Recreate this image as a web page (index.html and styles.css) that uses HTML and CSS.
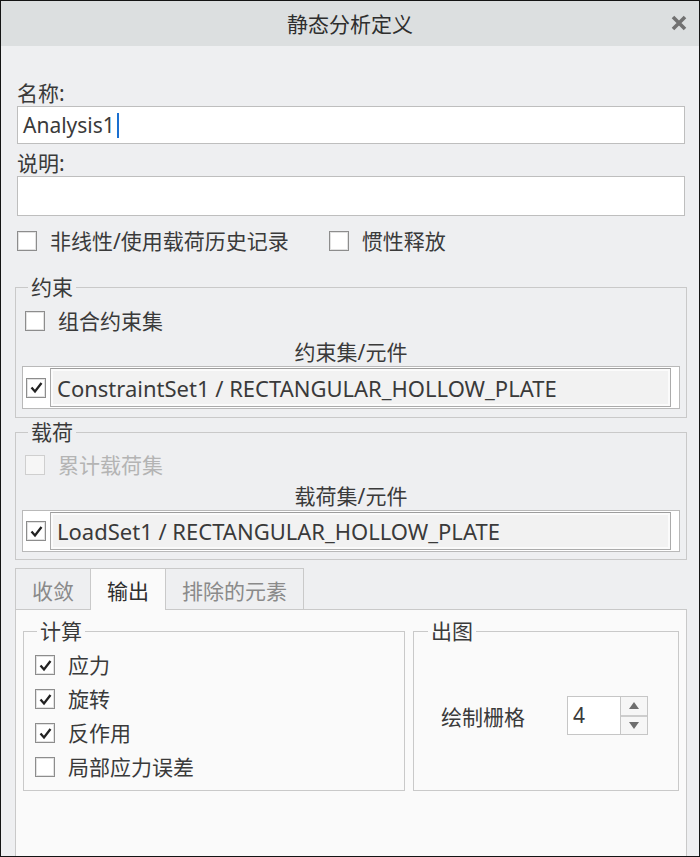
FILE: index.html
```html
<!DOCTYPE html>
<html>
<head>
  <meta charset="UTF-8">
  <title>静态分析定义</title>
  <link rel="stylesheet" href="styles.css">
</head>
<body>
  <div class="window">
    <div class="titlebar">
      <span></span>
      <div class="title">静态分析定义</div>
      <div class="close">
        <svg width="16" height="16" viewBox="0 0 16 16"><path d="M2 2 L14 14 M14 2 L2 14" stroke="#717171" stroke-width="3.6" fill="none"/></svg>
      </div>
    </div>

    <div class="content">
      <div class="field-label">名称:</div>
      <div class="text-input"><span>Analysis1</span><span class="caret"></span></div>
      <div class="field-label">说明:</div>
      <div class="text-input tall"></div>

      <div class="option-row">
        <label class="check"><span class="box"></span>非线性/使用载荷历史记录</label>
        <label class="check"><span class="box"></span>惯性释放</label>
      </div>

      <fieldset class="group">
        <legend>约束</legend>
        <label class="check inset"><span class="box"></span>组合约束集</label>
        <div class="list-head">约束集/元件</div>
        <div class="set-list">
          <span class="box checked"><svg width="17" height="17" viewBox="0 0 17 17"><path d="M3.5 8.5 L7 12.5 L13.5 4" stroke="#222" stroke-width="2.3" fill="none"/></svg></span>
          <div class="set-cell">ConstraintSet1 / RECTANGULAR_HOLLOW_PLATE</div>
        </div>
      </fieldset>

      <fieldset class="group loads">
        <legend>载荷</legend>
        <label class="check inset disabled"><span class="box"></span>累计载荷集</label>
        <div class="list-head">载荷集/元件</div>
        <div class="set-list">
          <span class="box checked"><svg width="17" height="17" viewBox="0 0 17 17"><path d="M3.5 8.5 L7 12.5 L13.5 4" stroke="#222" stroke-width="2.3" fill="none"/></svg></span>
          <div class="set-cell">LoadSet1 / RECTANGULAR_HOLLOW_PLATE</div>
        </div>
      </fieldset>

      <div class="tabs">
        <div class="tab">收敛</div>
        <div class="tab active">输出</div>
        <div class="tab">排除的元素</div>
      </div>

      <div class="tab-panel">
        <fieldset class="group calc">
          <legend>计算</legend>
          <label class="check row"><span class="box checked"><svg width="17" height="17" viewBox="0 0 17 17"><path d="M3.5 8.5 L7 12.5 L13.5 4" stroke="#222" stroke-width="2.3" fill="none"/></svg></span>应力</label>
          <label class="check row"><span class="box checked"><svg width="17" height="17" viewBox="0 0 17 17"><path d="M3.5 8.5 L7 12.5 L13.5 4" stroke="#222" stroke-width="2.3" fill="none"/></svg></span>旋转</label>
          <label class="check row"><span class="box checked"><svg width="17" height="17" viewBox="0 0 17 17"><path d="M3.5 8.5 L7 12.5 L13.5 4" stroke="#222" stroke-width="2.3" fill="none"/></svg></span>反作用</label>
          <label class="check row"><span class="box"></span>局部应力误差</label>
        </fieldset>

        <fieldset class="group calc plot">
          <legend>出图</legend>
          <div class="plot-row">
            <span>绘制栅格</span>
            <div class="spinner">
              <div class="spin-value">4</div>
              <div class="spin-arrows">
                <div class="spin-btn"><span class="arrow-up"></span></div>
                <div class="spin-btn"><span class="arrow-down"></span></div>
              </div>
            </div>
          </div>
        </fieldset>
      </div>
    </div>
  </div>
</body>
</html>
```

FILE: styles.css
```css
html, body {
  margin: 0;
  padding: 0;
}

body {
  width: 700px;
  height: 857px;
  font-family: "Noto Sans", "Noto Sans CJK SC", sans-serif;
  font-size: 21px;
  color: #3a3a3a;
  background: #eeeff1;
}

.window {
  height: 857px;
  box-sizing: border-box;
  border: 1px solid #141414;
  display: flex;
  flex-direction: column;
  background: #eeeff1;
}

.titlebar {
  height: 45px;
  flex: none;
  background: #dcdfe0;
  display: grid;
  grid-template-columns: 1fr auto 1fr;
  align-items: center;
}

.title {
  font-size: 21px;
  color: #2e2e2e;
  padding-bottom: 2px;
}

.close {
  justify-self: end;
  padding-right: 12px;
  display: flex;
  align-items: center;
  padding-bottom: 2px;
}

.content {
  flex: 1;
  display: flex;
  flex-direction: column;
  padding: 34px 12px 0 14px;
}

.field-label {
  margin-left: 2px;
  line-height: 26px;
}

.text-input {
  height: 38px;
  box-sizing: border-box;
  margin: 0 2px;
  padding-left: 5px;
  background: #fff;
  border: 1px solid #bebebe;
  display: flex;
  align-items: center;
}

.text-input.tall {
  height: 40px;
}

.text-input + .field-label {
  margin-top: 6px;
}

.caret {
  width: 2px;
  height: 25px;
  margin-left: 2px;
  background: #1a6fd0;
}

.option-row {
  margin-top: 13px;
  padding-left: 2px;
  display: flex;
  gap: 40px;
  height: 24px;
}

.check {
  display: flex;
  align-items: center;
  line-height: 24px;
}

.check.inset {
  margin-left: 3px;
}

.check.disabled {
  color: #b4b4b4;
}

.box {
  width: 20px;
  height: 20px;
  box-sizing: border-box;
  margin-right: 13px;
  border: 1px solid #8d8d8d;
  box-shadow: inset 0 0 0 1px #e2e2e2;
  background: #fff;
  display: flex;
  align-items: center;
  justify-content: center;
  flex: none;
}

.disabled .box {
  border-color: #cfcfcf;
  box-shadow: none;
  background: #f6f6f6;
}

.group {
  margin: 22px 0 0;
  padding: 10px 6px 8px 6px;
  border: 1px solid #c9c9c9;
  min-width: 0;
}

.group legend {
  margin-left: 6px;
  padding: 0 3px;
  line-height: 24px;
}

.group.loads {
  margin-top: 2px;
  padding-top: 9px;
  padding-bottom: 7px;
}

.list-head {
  margin-top: 7px;
  text-align: center;
  line-height: 24px;
}

.set-list {
  margin-top: 2px;
  height: 43px;
  box-sizing: border-box;
  padding: 1px 8px 1px 3px;
  border: 1px solid #b9b9b9;
  background: #fff;
  display: flex;
  align-items: center;
}

.loads .set-list {
  height: 42px;
}

.set-list .box {
  margin-right: 4px;
}

.set-cell {
  flex: 1;
  align-self: stretch;
  padding-left: 6px;
  font-size: 22px;
  border: 1px solid #ababab;
  border-top-color: #9d9d9d;
  box-shadow: inset 0 0 0 2px #fbfbfb;
  background: #f2f2f2;
  display: flex;
  align-items: center;
}

.tabs {
  margin-top: 8px;
  display: flex;
}

.tab {
  height: 41px;
  box-sizing: border-box;
  padding: 5px 16px 0;
  line-height: 34px;
  margin-right: -1px;
  border: 1px solid #c9c9c9;
  border-bottom: none;
  color: #8a8a8a;
  background: #eeeff1;
}

.tab.active {
  height: 42px;
  margin-bottom: -1px;
  position: relative;
  background: #fafafa;
  color: #2e2e2e;
}

.tab-panel {
  flex: 1;
  background: #fafafa;
  border: 1px solid #c9c9c9;
  border-bottom: none;
  padding: 9px 7px 0;
  display: grid;
  grid-template-columns: 382px 1fr;
  gap: 8px;
  align-items: start;
}

.group.calc {
  margin: 0;
  padding: 5px 10px 7px 11px;
  height: 172px;
  box-sizing: border-box;
}

.group.calc legend {
  margin-left: 2px;
}

.group.plot legend {
  margin-left: 3px;
}

.check.row {
  line-height: 34px;
}

.plot-row {
  margin-top: 48px;
  margin-left: 16px;
  display: flex;
  align-items: center;
  gap: 42px;
}

.spinner {
  width: 81px;
  height: 39px;
  box-sizing: border-box;
  border: 1px solid #c6c6c6;
  background: #fff;
  display: flex;
}

.spin-value {
  flex: 1;
  padding-left: 5px;
  line-height: 37px;
}

.spin-arrows {
  width: 26px;
  border-left: 1px solid #c6c6c6;
  background: #f6f6f6;
  display: flex;
  flex-direction: column;
}

.spin-btn {
  flex: 1;
  display: flex;
  align-items: center;
  justify-content: center;
}

.spin-btn + .spin-btn {
  border-top: 2px solid #cdcdcd;
}

.arrow-up,
.arrow-down {
  width: 0;
  height: 0;
  border-left: 5px solid transparent;
  border-right: 5px solid transparent;
}

.arrow-up {
  border-bottom: 7px solid #6e6e6e;
}

.arrow-down {
  border-top: 7px solid #6e6e6e;
}
```
